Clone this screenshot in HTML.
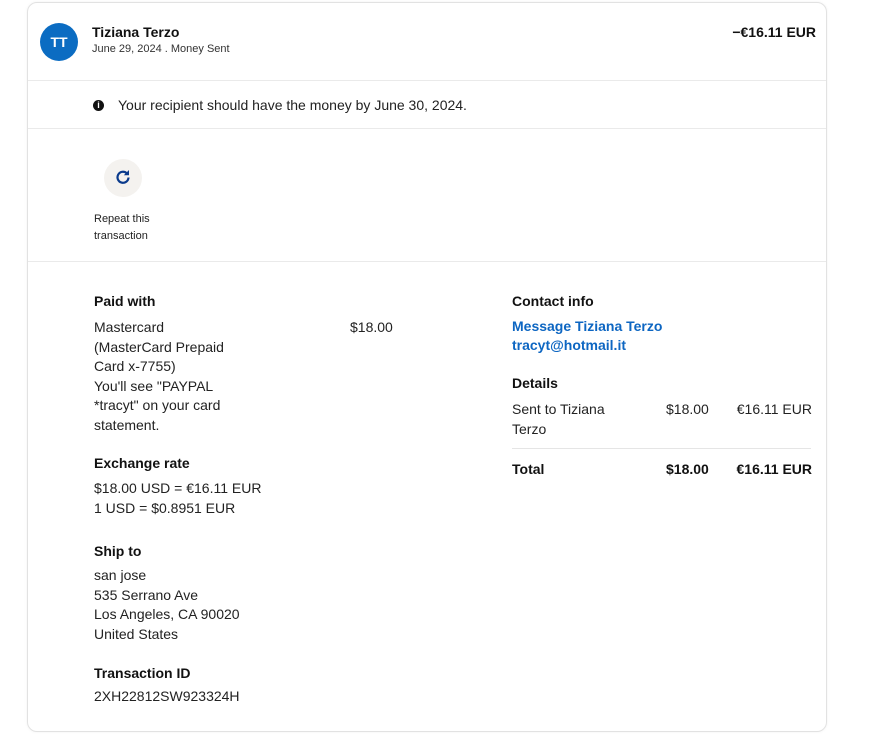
<!DOCTYPE html>
<html><head><meta charset="utf-8"><style>
*{margin:0;padding:0;box-sizing:border-box}
body{width:889px;height:734px;background:#fff;font-family:"Liberation Sans",sans-serif;color:#1a1a1a;position:relative;overflow:hidden}
.card{position:absolute;left:27px;top:2px;width:800px;height:730px;border:1px solid #e2e2e2;border-radius:10px;box-shadow:0 0 3px rgba(0,0,0,.05)}
.a{position:absolute;white-space:nowrap}
.hr{position:absolute;left:28px;width:798px;height:1px;background:#eaeaea}
.t{font-size:14px;line-height:19.5px;color:#222}
.h{font-size:14px;font-weight:bold;color:#111}
.b{color:#0d66c2;font-weight:bold;font-size:14px}
</style></head><body>
<div class="card"></div>
<div class="a" style="left:40px;top:23px;width:38px;height:38px;border-radius:50%;background:#0b6cc2;color:#fff;font-weight:bold;font-size:14px;text-align:center;line-height:38px">TT</div>
<div class="a h" style="left:92px;top:24px;font-size:14px">Tiziana Terzo</div>
<div class="a" style="left:92px;top:43px;font-size:11px;color:#333">June 29, 2024 . Money Sent</div>
<div class="a h" style="right:73px;top:24px">−€16.11 EUR</div>
<div class="hr" style="top:80px"></div>
<div class="a" style="left:93px;top:100px;width:11px;height:11px;border-radius:50%;background:#111;color:#fff;font-size:9px;font-weight:bold;text-align:center;line-height:11px">i</div>
<div class="a t" style="left:118px;top:96px;font-size:14px">Your recipient should have the money by June 30, 2024.</div>
<div class="hr" style="top:128px"></div>
<div class="a" style="left:104px;top:159px;width:38px;height:38px;border-radius:50%;background:#f4f2ef"></div>
<svg class="a" style="left:114px;top:168px" width="18" height="18" viewBox="0 0 18 18"><path d="M14.5 9.5a5.5 5.5 0 1 1-1.8-4.3" fill="none" stroke="#0a3a8c" stroke-width="2.2"/><path d="M15 2v5.2h-5.2z" fill="#0a3a8c"/></svg>
<div class="a" style="left:94px;top:211px;font-size:11px;line-height:17px;color:#222">Repeat this<br>transaction</div>
<div class="hr" style="top:261px"></div>
<div class="a h" style="left:94px;top:293px">Paid with</div>
<div class="a t" style="left:94px;top:318px">Mastercard<br>(MasterCard Prepaid<br>Card x-7755)<br>You'll see "PAYPAL<br>*tracyt" on your card<br>statement.</div>
<div class="a t" style="left:350px;top:318px">$18.00</div>
<div class="a h" style="left:94px;top:455px">Exchange rate</div>
<div class="a t" style="left:94px;top:479px">$18.00 USD = €16.11 EUR<br>1 USD = $0.8951 EUR</div>
<div class="a h" style="left:94px;top:543px">Ship to</div>
<div class="a t" style="left:94px;top:566px">san jose<br>535 Serrano Ave<br>Los Angeles, CA 90020<br>United States</div>
<div class="a h" style="left:94px;top:665px">Transaction ID</div>
<div class="a t" style="left:94px;top:687px">2XH22812SW923324H</div>
<div class="a h" style="left:512px;top:293px">Contact info</div>
<div class="a b" style="left:512px;top:317px;line-height:19px">Message Tiziana Terzo<br>tracyt@hotmail.it</div>
<div class="a h" style="left:512px;top:375px">Details</div>
<div class="a t" style="left:512px;top:400px">Sent to Tiziana<br>Terzo</div>
<div class="a t" style="left:666px;top:400px">$18.00</div>
<div class="a t" style="right:77px;top:400px">€16.11 EUR</div>
<div class="a" style="left:512px;top:448px;width:299px;height:1px;background:#e5e5e5"></div>
<div class="a h" style="left:512px;top:461px">Total</div>
<div class="a h" style="left:666px;top:461px">$18.00</div>
<div class="a h" style="right:77px;top:461px">€16.11 EUR</div>
</body></html>
